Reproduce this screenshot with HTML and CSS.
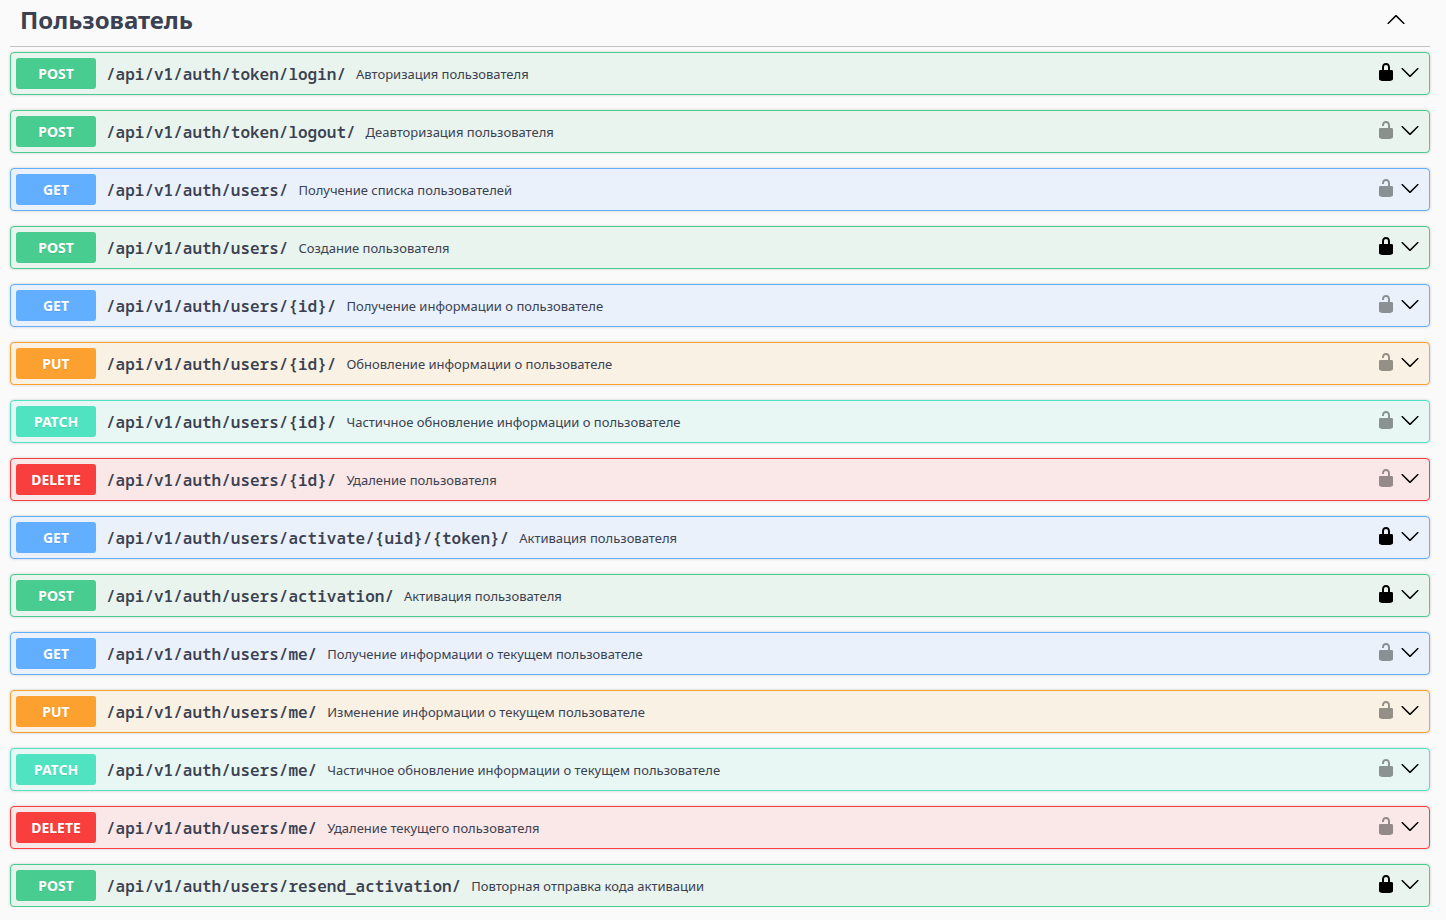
FILE: index.html
```html
<!DOCTYPE html>
<html lang="ru">
<head>
<meta charset="utf-8">
<title>API — Пользователь</title>
<link rel="stylesheet" href="styles.css">
</head>
<body>
<svg class="sprite" aria-hidden="true">
  <symbol id="locked" viewBox="0 0 20 20"><path d="M15.8 8H14V5.6C14 2.703 12.665 1 10 1 7.334 1 6 2.703 6 5.6V8H4c-.553 0-1 .646-1 1.199V17c0 .549.428 1.139.951 1.307l1.197.387C5.672 18.861 6.55 19 7.1 19h5.8c.549 0 1.428-.139 1.951-.307l1.196-.387c.524-.167.953-.757.953-1.306V9.199C17 8.646 16.352 8 15.8 8zM12 8H8V5.199C8 3.754 8.797 3 10 3c1.203 0 2 .754 2 2.199V8z"/></symbol>
  <symbol id="unlocked" viewBox="0 0 20 20"><path d="M15.8 8H14V5.6C14 2.703 12.665 1 10 1 7.334 1 6 2.703 6 5.6V6h2v-.801C8 3.754 8.797 3 10 3c1.203 0 2 .754 2 2.199V8H4c-.553 0-1 .646-1 1.199V17c0 .549.428 1.139.951 1.307l1.197.387C5.672 18.861 6.55 19 7.1 19h5.8c.549 0 1.428-.139 1.951-.307l1.196-.387c.524-.167.953-.757.953-1.306V9.199C17 8.646 16.352 8 15.8 8z"/></symbol>
  <symbol id="down" viewBox="0 0 20 20"><path d="M17.418 6.109c.272-.268.709-.268.979 0s.271.701 0 .969l-7.908 7.83c-.27.268-.707.268-.979 0l-7.908-7.83c-.27-.268-.27-.701 0-.969.271-.268.709-.268.979 0L10 13.25l7.418-7.141z"/></symbol>
  <symbol id="up" viewBox="0 0 20 20"><path d="M17.418 14.908c.272.268.709.268.979 0s.271-.701 0-.969l-7.908-7.83c-.27-.268-.707-.268-.979 0l-7.908 7.83c-.27.268-.27.701 0 .969.271.268.709.268.979 0L10 7.767l7.418 7.141z"/></symbol>
</svg>
<main class="section">
  <header class="tag">
    <h3 class="tag-title">Пользователь</h3>
    <button class="tag-toggle" aria-label="Свернуть раздел" aria-expanded="true"><svg class="icon"><use href="#up"/></svg></button>
  </header>
  <div class="operations" id="operations"></div>
</main>
<script src="script.js"></script>
</body>
</html>
```
FILE: styles.css
```css
* {
  box-sizing: border-box;
}

body {
  margin: 0;
  background: #fafafa;
  color: #3b4151;
  font-family: "Noto Sans", "Open Sans", sans-serif;
}

button {
  margin: 0;
  padding: 0;
  border: 0;
  background: none;
  color: inherit;
  font: inherit;
  text-align: left;
  cursor: pointer;
}

.sprite {
  display: none;
}

.icon {
  display: block;
  width: 20px;
  height: 20px;
  fill: #000;
}

.section {
  padding: 0 16px 0 10px;
}

.tag {
  display: flex;
  align-items: center;
  margin-bottom: 5px;
  padding: 3px 20px 10px 10px;
  border-bottom: 1px solid rgba(59, 65, 81, .3);
}

.tag-title {
  flex: 1;
  margin: 0;
  font-size: 24px;
  font-weight: 700;
}

.tag-toggle {
  padding: 0 4px 1px;
}

.operations {
  display: flex;
  flex-direction: column;
  gap: 15px;
}

.operation {
  display: flex;
  align-items: center;
  padding: 5px;
  border: 1px solid var(--method);
  border-radius: 4px;
  background: var(--tint);
  box-shadow: 0 0 3px rgba(0, 0, 0, .19);
}

.summary {
  display: flex;
  flex: 1;
  align-items: center;
  min-width: 0;
}

.method {
  min-width: 80px;
  padding: 6px 0;
  border-radius: 3px;
  background: var(--method);
  color: #fff;
  font-size: 14px;
  font-weight: 700;
  text-align: center;
  text-shadow: 0 1px 0 rgba(0, 0, 0, .1);
}

.path {
  padding: 0 10px;
  font-family: "Noto Sans Mono", "DejaVu Sans Mono", monospace;
  font-size: 16px;
  font-weight: 600;
}

.description {
  font-size: 13px;
}

.actions {
  display: flex;
  gap: 4px;
  padding: 0 4px 3px 0;
}

.open {
  opacity: .4;
}

.post {
  --method: #49cc90;
  --tint: #e8f4ed;
}

.get {
  --method: #61affe;
  --tint: #eaf1fa;
}

.put {
  --method: #fca130;
  --tint: #f9f1e3;
}

.patch {
  --method: #50e3c2;
  --tint: #e8f7f4;
}

.delete {
  --method: #f93e3e;
  --tint: #fae7e7;
}
```
FILE: script.js
```js
const operations = [
  ["POST", "token/login/", "Авторизация пользователя", true],
  ["POST", "token/logout/", "Деавторизация пользователя", false],
  ["GET", "users/", "Получение списка пользователей", false],
  ["POST", "users/", "Создание пользователя", true],
  ["GET", "users/{id}/", "Получение информации о пользователе", false],
  ["PUT", "users/{id}/", "Обновление информации о пользователе", false],
  ["PATCH", "users/{id}/", "Частичное обновление информации о пользователе", false],
  ["DELETE", "users/{id}/", "Удаление пользователя", false],
  ["GET", "users/activate/{uid}/{token}/", "Активация пользователя", true],
  ["POST", "users/activation/", "Активация пользователя", true],
  ["GET", "users/me/", "Получение информации о текущем пользователе", false],
  ["PUT", "users/me/", "Изменение информации о текущем пользователе", false],
  ["PATCH", "users/me/", "Частичное обновление информации о текущем пользователе", false],
  ["DELETE", "users/me/", "Удаление текущего пользователя", false],
  ["POST", "users/resend_activation/", "Повторная отправка кода активации", true]
];

document.getElementById("operations").innerHTML = operations.map(([method, path, text, locked]) => `
  <div class="operation ${method.toLowerCase()}">
    <button class="summary">
      <span class="method">${method}</span>
      <span class="path">/api/v1/auth/${path}</span>
      <span class="description">${text}</span>
    </button>
    <div class="actions">
      <button class="${locked ? "closed" : "open"}" aria-label="Авторизация"><svg class="icon"><use href="#${locked ? "locked" : "unlocked"}"/></svg></button>
      <button aria-label="Развернуть"><svg class="icon"><use href="#down"/></svg></button>
    </div>
  </div>`).join("");
```
